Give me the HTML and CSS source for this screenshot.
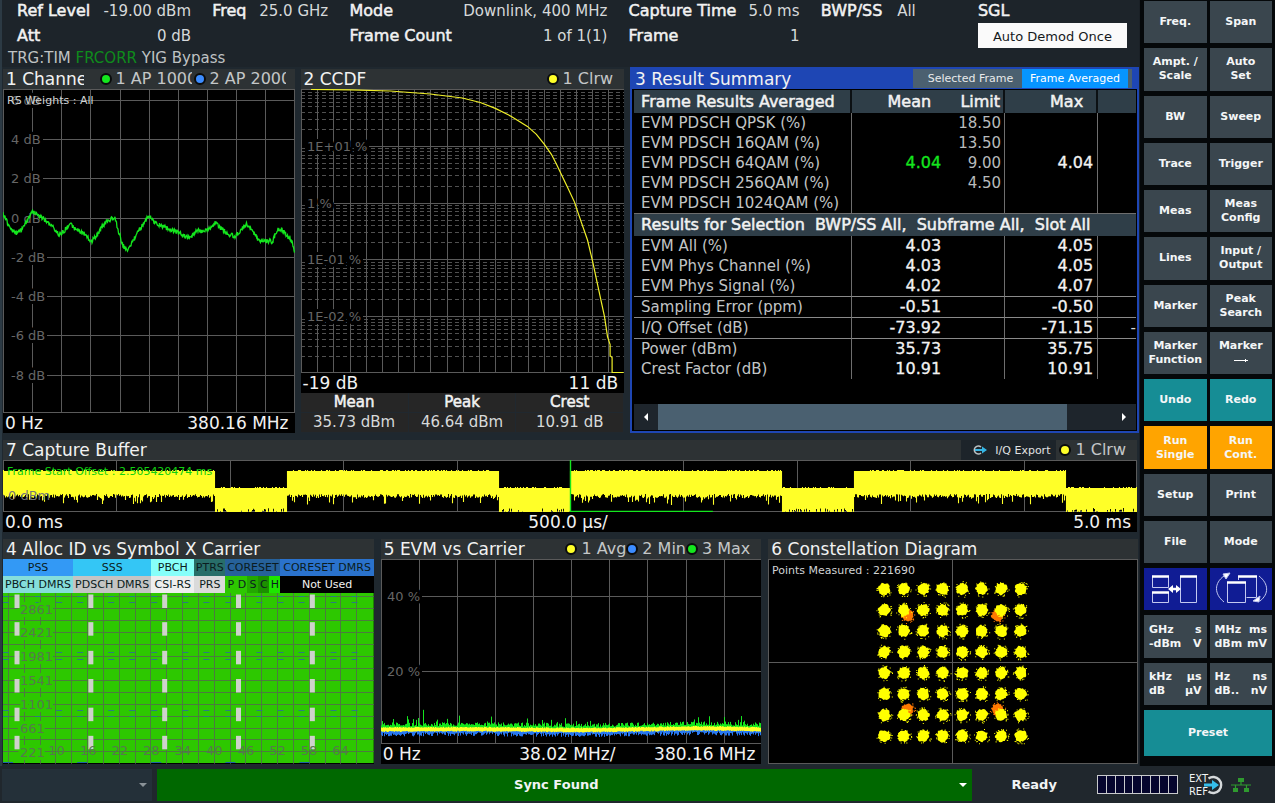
FILE: index.html
```html
<!DOCTYPE html>
<html lang="en">
<head>
<meta charset="utf-8">
<title>Signal Analyzer</title>
<link rel="stylesheet" href="styles.css">
</head>
<body>
<div class="app">
  <main class="work">
    <header class="settings">
      <div class="settings-grid">
        <div class="group group-level">
          <div class="pair"><b>Ref Level</b><span>-19.00 dBm</span></div>
          <div class="pair"><b>Att</b><span>0 dB</span></div>
        </div>
        <div class="group group-freq"><div class="pair"><b>Freq</b><span>25.0 GHz</span></div></div>
        <div class="group group-mode">
          <div class="pair"><b>Mode</b><span>Downlink, 400 MHz</span></div>
          <div class="pair"><b>Frame Count</b><span>1 of 1(1)</span></div>
        </div>
        <div class="group group-capture">
          <div class="pair"><b>Capture Time</b><span>5.0 ms</span></div>
          <div class="pair"><b>Frame</b><span>1</span></div>
        </div>
        <div class="group group-bwp"><div class="pair"><b>BWP/SS</b><span>All</span></div></div>
        <div class="group group-sweep">
          <div class="pair"><b>SGL</b></div>
          <button class="demod" type="button">Auto Demod Once</button>
        </div>
      </div>
      <p class="flags">TRG:TIM <span class="corr">FRCORR</span> YIG Bypass</p>
    </header>

    <div class="row row-top">
      <section class="panel">
        <div class="bar">
          <h2 class="title clip-title">1 Channel</h2>
          <div class="legend legend-clip">
            <span class="trace"><i class="dot green"></i><span class="clip-name">1 AP 1000</span></span>
            <span class="trace"><i class="dot blue"></i><span class="clip-name">2 AP 2000</span></span>
          </div>
        </div>
        <svg class="plot" data-chart="flatness" role="img" aria-label="Channel flatness"></svg>
        <div class="axis"><span>0 Hz</span><span>380.16 MHz</span></div>
      </section>

      <section class="panel">
        <div class="bar">
          <h2 class="title">2 CCDF</h2>
          <div class="legend legend-inset"><span class="trace"><i class="dot yellow"></i>1 Clrw</span></div>
        </div>
        <svg class="plot" data-chart="ccdf" role="img" aria-label="CCDF"></svg>
        <div class="axis"><span>-19 dB</span><span>11 dB</span></div>
        <table class="stats">
          <thead><tr><th>Mean</th><th>Peak</th><th>Crest</th></tr></thead>
          <tbody><tr><td>35.73 dBm</td><td>46.64 dBm</td><td>10.91 dB</td></tr></tbody>
        </table>
      </section>

      <section class="panel panel-active">
        <div class="bar bar-active">
          <h2 class="title">3 Result Summary</h2>
          <div class="tabs">
            <button type="button" class="tab">Selected Frame</button>
            <button type="button" class="tab tab-on">Frame Averaged</button>
            <span class="tab-end"></span>
          </div>
        </div>
        <div class="summary">
          <table class="results">
            <colgroup><col class="c-name"><col class="c-mean"><col class="c-limit"><col class="c-max"><col></colgroup>
            <thead><tr class="head"><th class="name line">Frame Results Averaged</th><th class="h-mean">Mean</th><th class="h-limit line">Limit</th><th class="h-max line">Max</th><th></th></tr></thead>
            <tbody>
              <tr><td class="name line">EVM PDSCH QPSK (%)</td><td></td><td class="limit line">18.50</td><td class="line"></td><td></td></tr>
              <tr><td class="name line">EVM PDSCH 16QAM (%)</td><td></td><td class="limit line">13.50</td><td class="line"></td><td></td></tr>
              <tr><td class="name line">EVM PDSCH 64QAM (%)</td><td class="num pass">4.04</td><td class="limit line">9.00</td><td class="num line">4.04</td><td></td></tr>
              <tr><td class="name line">EVM PDSCH 256QAM (%)</td><td></td><td class="limit line">4.50</td><td class="line"></td><td></td></tr>
              <tr><td class="name line">EVM PDSCH 1024QAM (%)</td><td></td><td class="line"></td><td class="line"></td><td></td></tr>
            </tbody>
            <tbody>
              <tr class="head sub"><th class="name" colspan="5">Results for Selection&nbsp; BWP/SS All,&nbsp; Subframe All,&nbsp; Slot All</th></tr>
              <tr><td class="name line">EVM All (%)</td><td class="num">4.03</td><td class="line"></td><td class="num line">4.05</td><td></td></tr>
              <tr><td class="name line">EVM Phys Channel (%)</td><td class="num">4.03</td><td class="line"></td><td class="num line">4.05</td><td></td></tr>
              <tr class="rule"><td class="name line">EVM Phys Signal (%)</td><td class="num">4.02</td><td class="line"></td><td class="num line">4.07</td><td></td></tr>
              <tr class="rule"><td class="name line">Sampling Error (ppm)</td><td class="num">-0.51</td><td class="line"></td><td class="num line">-0.50</td><td></td></tr>
              <tr class="rule"><td class="name line">I/Q Offset (dB)</td><td class="num">-73.92</td><td class="line"></td><td class="num line">-71.15</td><td class="more">-</td></tr>
              <tr><td class="name line">Power (dBm)</td><td class="num">35.73</td><td class="line"></td><td class="num line">35.75</td><td></td></tr>
              <tr><td class="name line">Crest Factor (dB)</td><td class="num">10.91</td><td class="line"></td><td class="num line">10.91</td><td></td></tr>
            </tbody>
          </table>
          <div class="scroller">
            <button type="button" class="scroll-btn" aria-label="Scroll left"><i class="tri tri-left"></i></button>
            <div class="track"><div class="thumb"></div></div>
            <button type="button" class="scroll-btn" aria-label="Scroll right"><i class="tri tri-right"></i></button>
          </div>
        </div>
      </section>
    </div>

    <section class="panel panel-capture">
      <div class="bar">
        <h2 class="title">7 Capture Buffer</h2>
        <div class="legend">
          <button type="button" class="export">
            <svg width="16" height="12" viewBox="0 0 16 12" aria-hidden="true"><path d="M9 3A4 4 0 1 0 9 9" fill="none" stroke="#b8c0c4" stroke-width="1.6"/><path d="M3 5h7V2.500l5 3.500-5 3.500V7H3z" fill="#35b5e5"/></svg>
            I/Q Export</button>
          <span class="trace trace-last"><i class="dot yellow"></i>1 Clrw</span>
        </div>
      </div>
      <svg class="plot" data-chart="capture" role="img" aria-label="Capture buffer"></svg>
      <div class="axis axis-three"><span>0.0 ms</span><span>500.0 µs/</span><span>5.0 ms</span></div>
    </section>

    <div class="row row-bottom">
      <section class="panel">
        <div class="bar"><h2 class="title">4 Alloc ID vs Symbol X Carrier</h2></div>
        <div class="alloc">
          <span class="a-pss">PSS</span><span class="a-sss">SSS</span><span class="a-pbch">PBCH</span><span class="a-ptrs">PTRS</span><span class="a-core">CORESET</span><span class="a-cdmrs">CORESET DMRS</span>
          <span class="a-pbdmrs">PBCH DMRS</span><span class="a-pddmrs">PDSCH DMRS</span><span class="a-csi">CSI-RS</span><span class="a-prs">PRS</span><span class="a-pdsch"><i>P</i><i>D</i><i>S</i><i>C</i><i>H</i></span><span class="a-none">Not Used</span>
        </div>
        <svg class="plot" data-chart="alloc" role="img" aria-label="Allocation map"></svg>
      </section>

      <section class="panel">
        <div class="bar">
          <h2 class="title">5 EVM vs Carrier</h2>
          <div class="legend legend-inset">
            <span class="trace"><i class="dot yellow"></i>1 Avg</span><span class="trace"><i class="dot blue"></i>2 Min</span><span class="trace"><i class="dot green"></i>3 Max</span>
          </div>
        </div>
        <svg class="plot" data-chart="evm" role="img" aria-label="EVM vs carrier"></svg>
        <div class="axis"><span>0 Hz</span><span class="axis-mid">38.02 MHz/</span><span>380.16 MHz</span></div>
      </section>

      <section class="panel">
        <div class="bar"><h2 class="title">6 Constellation Diagram</h2></div>
        <svg class="plot" data-chart="constellation" role="img" aria-label="Constellation diagram"></svg>
      </section>
    </div>
  </main>

  <nav class="keys" aria-label="Instrument keys">
    <button type="button" class="key">Freq.</button><button type="button" class="key">Span</button>
    <button type="button" class="key">Ampt. /<br>Scale</button><button type="button" class="key">Auto<br>Set</button>
    <button type="button" class="key">BW</button><button type="button" class="key">Sweep</button>
    <button type="button" class="key">Trace</button><button type="button" class="key">Trigger</button>
    <button type="button" class="key">Meas</button><button type="button" class="key">Meas<br>Config</button>
    <button type="button" class="key">Lines</button><button type="button" class="key">Input /<br>Output</button>
    <button type="button" class="key">Marker</button><button type="button" class="key">Peak<br>Search</button>
    <button type="button" class="key">Marker<br>Function</button>
    <button type="button" class="key">Marker<svg class="arrow" width="16" height="14" viewBox="0 0 16 14" aria-hidden="true"><path d="M1 7.500H15M12.500 6v3" stroke="#fff" stroke-width="1" fill="none"/></svg></button>
    <button type="button" class="key teal">Undo</button><button type="button" class="key teal">Redo</button>
    <button type="button" class="key orange">Run<br>Single</button><button type="button" class="key orange">Run<br>Cont.</button>
    <button type="button" class="key">Setup</button><button type="button" class="key">Print</button>
    <button type="button" class="key">File</button><button type="button" class="key">Mode</button>
    <button type="button" class="key navy" aria-label="Toggle split view">
      <svg width="50" height="32" viewBox="0 0 50 32" fill="none" stroke="#c3c8f0" aria-hidden="true"><path d="M2.500 3v11.500h16V3M2.500 20v9.500h16V20M30.500 3v26.500h16V3"/><path d="M2 3.500h17M2 19.500h17M30 3.500h17" stroke="#fff" stroke-width="2.500"/><path d="M21 16h8" stroke="#fff" stroke-width="2.500"/><path d="M18 16l5-4v8zM31 16l-5-4v8z" fill="#fff" stroke="none"/></svg>
    </button>
    <button type="button" class="key navy" aria-label="Cycle windows">
      <svg width="54" height="34" viewBox="0 0 54 34" fill="none" stroke="#c3c8f0" aria-hidden="true"><path d="M24.500 8V4M42.500 4v21.500h-10"/><path d="M24 4.500h19" stroke="#fff" stroke-width="2.500"/><path d="M13.500 10v20.500h18V10"/><path d="M13 10.500h19" stroke="#fff" stroke-width="2.500"/><path d="M10 30C0 22 0 11 10 4M45 4c10 8 10 18 1 25"/><path d="M9 2l7-1-4 6zM46 24l-1 6-6-1z" fill="#fff"/></svg>
    </button>
    <button type="button" class="key units"><span>GHz</span><span>s</span><span>-dBm</span><span>V</span></button>
    <button type="button" class="key units"><span>MHz</span><span>ms</span><span>dBm</span><span>mV</span></button>
    <button type="button" class="key units"><span>kHz</span><span>µs</span><span>dB</span><span>µV</span></button>
    <button type="button" class="key units"><span>Hz</span><span>ns</span><span>dB..</span><span>nV</span></button>
    <button type="button" class="key teal wide">Preset</button>
  </nav>
</div>

<footer class="status">
  <div class="pick pick-empty"><select aria-label="Message list"><option></option></select></div>
  <div class="pick pick-sync"><select aria-label="Measurement status"><option>Sync Found</option></select></div>
  <span class="ready">Ready</span>
  <div class="cells" aria-hidden="true"><i></i><i></i><i></i><i></i><i></i><i></i><i></i><i></i><i></i></div>
  <div class="ext">
    <span>EXT<br>REF</span>
    <svg width="20" height="20" viewBox="0 0 20 20" aria-hidden="true"><path d="M4.500 3.500A8 8 0 1 1 4.500 16.500" fill="none" stroke="#d5d9db" stroke-width="2.400"/><path d="M0 8.500h8V5l7 5-7 5v-3.500H0z" fill="#35bdea"/></svg>
  </div>
  <svg class="net" width="20" height="16" viewBox="0 0 20 16" aria-hidden="true"><path d="M7 1h6v4H7zM2 11h5v4H2zM13 11h5v4h-5z" fill="#2f9a2f"/><path d="M10 5v3M0 8h20M4.500 8v3M15.500 8v3" stroke="#2f9a2f" stroke-width="1.200"/></svg>
</footer>
<script src="charts.js"></script>
</body>
</html>
```
FILE: styles.css
```css
* { box-sizing: border-box; }

body {
  margin: 0;
  min-height: 100vh;
  display: flex;
  flex-direction: column;
  background: #1f272e;
  color: #d6d9da;
  font-family: "DejaVu Sans", Verdana, sans-serif;
  font-size: 15px;
}

button, select { font-family: inherit; color: inherit; border: 0; margin: 0; padding: 0; border-radius: 0; }
h2, p { margin: 0; font-weight: normal; }

.app { flex: 1; display: grid; grid-template-columns: minmax(0, 1fr) 136px; }

.work {
  display: flex;
  flex-direction: column;
  min-width: 0;
  border-left: 2px solid #2c3a44;
  background: #1f282f;
}

/* Settings header */
.settings { height: 67px; padding: 0 12px 0 6px; background: #1d242a; white-space: nowrap; }
.settings-grid { display: flex; justify-content: space-between; height: 50px; padding-left: 9px; }
.pair { display: flex; justify-content: space-between; height: 25px; line-height: 22px; }
.pair b { font-size: 16px; font-weight: normal; color: #f2f2f2; -webkit-text-stroke: 0.5px #f2f2f2; }
.group-level { width: 174px; }
.group-freq { width: 116px; }
.group-mode { width: 258px; }
.group-capture { width: 171px; }
.group-bwp { width: 95px; }
.group-sweep { width: 149px; margin-left: 41px; }
.group-sweep .pair { height: 23px; }
.demod { width: 100%; height: 25px; background: #fafafa; color: #15191c; font-size: 13px; line-height: 22px; padding-top: 3px; display: block; }
.flags { line-height: 17px; color: #bfc2c3; }
.corr { color: #0f8a1c; }

/* Panel rows */
.row { display: grid; gap: 7px; min-height: 0; }
.row-top { grid-template-columns: minmax(0, 291fr) minmax(0, 323fr) minmax(0, 508fr); flex: 366 1 0; gap: 6px; padding: 0 0 0 1px; }
.row-bottom { grid-template-columns: minmax(0, 371fr) minmax(0, 381fr) minmax(0, 370fr); flex: 225 1 0; margin: 7px 1px 2px; }

.panel { display: flex; flex-direction: column; min-width: 0; min-height: 0; }
.row-top .panel { padding-top: 2px; }
.panel-capture { flex: 0 0 92px; margin: 7px 2px 0 1px; }
.bar { display: flex; justify-content: space-between; align-items: center; height: 20px; flex: none; padding-left: 3px; background: #2d3234; overflow: hidden; white-space: nowrap; }
.title { font-size: 17px; line-height: 20px; color: #f2f2f2; }
.clip-title { width: 78px; overflow: hidden; }
.legend { display: flex; align-items: center; font-size: 16px; line-height: 20px; color: #c4c7c8; }
.legend-inset { padding-right: 11px; }
.legend-clip { gap: 2px; padding-right: 9px; }
.clip-name { width: 76px; overflow: hidden; }
.trace { display: flex; align-items: center; gap: 4px; }
.trace-last { padding-right: 11px; padding-left: 3px; }
.dot { width: 12px; height: 12px; border: 2px solid #0a0c0d; border-radius: 50%; }
.green { background: #14e61e; }
.blue { background: #3c8cff; }
.yellow { background: #ffff28; }

.plot { display: block; flex: 1 1 0; width: 100%; min-height: 40px; background: #000; }
.axis { flex: none; height: 20px; line-height: 20px; background: #000; color: #f2f2f2; font-size: 17px; display: flex; justify-content: space-between; padding: 0 6px 0 2px; }
.axis-three { display: grid; grid-template-columns: 1fr auto 1fr; }
.axis-three span:last-child { text-align: right; }
.axis-mid { margin-left: 60px; }

.stats { flex: none; width: 100%; table-layout: fixed; border-collapse: collapse; background: #262626; line-height: 19px; }
.stats th, .stats td { padding: 0; text-align: center; border: 1px solid #20282f; border-width: 0 1px 1px 0; height: 19px; }
.stats th { color: #f2f2f2; font-weight: normal; -webkit-text-stroke: 0.5px #f2f2f2; }

/* Result summary */
.row-top .panel-active { border: 2px solid #1e46b4; border-top: 0; padding: 0; }
.bar-active { height: 22px; background: #1e46b4; padding: 2px 5px 0 3px; }
.tabs { display: flex; height: 20px; padding-bottom: 1px; }
.tab { background: #4b6070; width: 109px; font-size: 11px; line-height: 19px; padding-left: 6px; color: #e8eaeb; }
.tab-on { background: #0795ff; width: 106px; padding: 0; color: #fff; }
.tab-end { width: 4px; background: #4b6070; }
.summary { flex: 1; display: flex; flex-direction: column; justify-content: space-between; background: #000; padding: 1px 1px 1px 2px; }
.results { width: 100%; table-layout: fixed; border-collapse: separate; border-spacing: 0; white-space: nowrap; }
.c-name { width: 218px; }
.c-mean { width: 93px; }
.c-limit { width: 60px; }
.c-max { width: 93px; }
.results td, .results th { padding: 0 3px 0 0; height: 20px; line-height: 20px; text-align: right; }
.results .name { text-align: left; padding-left: 7px; }
.results td.name { color: #c2c5c6; }
.results .line { border-right: 1px solid #6e6e6e; }
.results .head th { height: 23px; line-height: 22px; background: #2f3e48; color: #f2f2f2; font-size: 16px; font-weight: normal; -webkit-text-stroke: 0.5px #f2f2f2; }
.results .head .line { border-right: 2px solid #0c1013; }
.results .h-mean { padding-right: 14px; }
.results .h-max { padding-right: 13px; }
.results .sub th { border-top: 1px solid #6e6e6e; }
.num { font-size: 16px; color: #f2f2f2; -webkit-text-stroke: 0.3px #f2f2f2; }
.results .num { padding-right: 4px; }
.pass { color: #14e61e; -webkit-text-stroke-color: #14e61e; }
.limit { color: #b8bbbc; }
.rule td { border-bottom: 1px solid #8a8a8a; }
.results .more { padding-right: 0; }
.scroller { display: flex; height: 26px; background: #1e252c; }
.scroll-btn { width: 24px; background: #1e252c; display: grid; place-items: center; }
.track { flex: 1; }
.thumb { width: 90%; height: 100%; background: #4a6070; }
.tri { border: 4px solid transparent; }
.tri-left { border-right-color: #fff; border-left-width: 0; }
.tri-right { border-left-color: #fff; border-right-width: 0; }

.export { height: 20px; background: #1d242a; display: flex; align-items: center; gap: 7px; padding: 0 6px 0 11px; font-size: 11px; color: #e0e2e3; }

/* Allocation legend */
.alloc { display: grid; grid-template-columns: 70fr 78fr 43fr 31fr 55fr 93fr; flex: none; font-size: 11px; line-height: 17px; color: #0b1c20; white-space: nowrap; }
.alloc span { text-align: center; height: 17px; min-width: 0; display: flex; justify-content: center; }
.a-pss { background: #3399f5; }
.a-sss { background: #34c6f5; }
.a-pbch { background: #87fffa; }
.a-ptrs { background: #286e69; }
.a-core { background: #26619a; }
.a-cdmrs { background: #2a72cc; }
.a-pbdmrs { background: #85dedb; }
.a-pddmrs { background: #c4c4c4; }
.a-csi { background: #eeeeee; }
.a-prs { background: #dadada; }
.a-pdsch i { flex: 1; font-style: normal; background: #2dc800; }
.a-pdsch i:nth-child(3) { background: #23a800; }
.a-pdsch i:nth-child(4) { background: #1c9000; }
.a-pdsch i:nth-child(5) { background: #1ee600; }
.a-none { background: #000; color: #f2f2f2; }

/* SVG chart parts */
.grid { stroke: #5a5a5a; stroke-width: 1; fill: none; shape-rendering: crispEdges; }
.grid-dash { stroke-dasharray: 4 3; stroke: #505050; }
.tick { fill: #666; font-size: 13px; stroke: #000; stroke-width: 6px; stroke-linejoin: round; paint-order: stroke; }
.tick-alloc { stroke: #2dc800; fill: #557a4d; }
.tick-bare { stroke: none; }
.note { fill: #d0d3d4; font-size: 11px; }
.note-green { fill: #10d010; }
.tick-small { fill: #777; font-size: 13px; }

/* Keypad */
.keys { display: grid; grid-template-columns: 1fr 1fr; grid-template-rows: repeat(15, minmax(0, 1fr)) 46px; gap: 5px 3px; padding: 1px 3px 10px 4px; background: #05080a; border-left: 1px solid #1a2026; }
.key { display: flex; flex-direction: column; align-items: center; justify-content: center; min-height: 36px; background: #3a464e; color: #f4f6f7; font-size: 11px; font-weight: bold; line-height: 14px; }
.key .arrow { display: block; }
.teal { background: #168d95; }
.orange { background: #ffa400; }
.navy { background: #101c94; }
.wide { grid-column: 1 / -1; }
.units { display: grid; grid-template-columns: auto auto; justify-content: space-between; align-content: center; justify-items: start; padding: 0 5px; }
.units span:nth-child(even) { justify-self: end; }

/* Status line */
.status { display: flex; align-items: center; height: 37px; padding: 0 0 0 2px; background: #20272d; font-weight: bold; font-size: 13px; color: #f2f4f5; }
.pick { display: grid; align-items: center; height: 32px; }
.pick select, .pick::after { grid-area: 1 / 1; }
.pick select { width: 100%; height: 100%; appearance: none; background: #243039; font-size: 13px; font-weight: bold; text-align: center; text-align-last: center; padding: 0 16px 0 0; }
.pick::after { content: ""; justify-self: end; margin-right: 5px; border: 4px solid transparent; border-top-color: #fff; border-bottom-width: 0; pointer-events: none; }
.pick-empty { width: 150px; }
.pick-empty::after { border-top-color: #8a9298; }
.pick-sync { flex: 1; margin-left: 5px; }
.pick-sync select { background: #006800; }
.ready { margin: 0 40px; }
.cells { display: flex; gap: 1px; width: 81px; height: 19px; padding: 1px; background: #c8cacc; }
.cells i { flex: 1; background: #05052d; }
.ext { display: flex; align-items: center; margin-left: 11px; font-size: 10px; line-height: 13px; font-weight: normal; }
.ext svg { margin-left: -4px; }
.net { margin: 0 24px 0 7px; }
```
FILE: charts.js
```js
(function () {
  var NS = "http://www.w3.org/2000/svg";

  function rng(seed) {
    return function () {
      seed = (seed * 1664525 + 1013904223) % 4294967296;
      return seed / 4294967296;
    };
  }
  function add(svg, tag, attrs, text) {
    var el = document.createElementNS(NS, tag);
    for (var k in attrs) el.setAttribute(k, attrs[k]);
    if (text !== undefined) el.textContent = text;
    svg.appendChild(el);
    return el;
  }
  function path(svg, d, attrs) { attrs.d = d; return add(svg, "path", attrs); }
  function line(a, b, c, d) { return "M" + a + " " + b + "L" + c + " " + d; }
  function columns(w, h, n) {
    var d = "";
    for (var i = 0; i <= n; i++) {
      var x = Math.min(w - 0.5, Math.round(i * w / n) + 0.5);
      d += line(x, 0, x, h);
    }
    return d;
  }
  function rows(w, ys) {
    return ys.map(function (y) { y = Math.round(y) + 0.5; return line(0, y, w, y); }).join("");
  }
  /* A label at the left edge, with its grid line running on from its end. */
  function tick(svg, w, x, y, text) {
    var t = add(svg, "text", { x: x, y: y + 5, "class": "tick" }, text);
    var box = t.getBBox(), end = box.x + box.width + 2;
    y = Math.round(y) + 0.5;
    path(svg, line(end, y, w, y), { "class": "grid" });
  }
  function interp(pts, x) {
    for (var i = 1; i < pts.length; i++) {
      if (x <= pts[i][0]) {
        var a = pts[i - 1], b = pts[i];
        return a[1] + (b[1] - a[1]) * (x - a[0]) / (b[0] - a[0]);
      }
    }
    return pts[pts.length - 1][1];
  }

  var charts = {
    flatness: function (svg, w, h) {
      var sy = h / 323, i;
      path(svg, columns(w, h, 10) + rows(w, [0, h - 1]), { "class": "grid" });
      ["6", "4", "2", "0", "-2", "-4", "-6", "-8"].forEach(function (v, n) {
        tick(svg, w, 8, (11 + n * 39.1) * sy, v + " dB");
      });
      var pts = [[12, 10], [25, 38], [40, 62], [55, 70], [70, 55], [85, 30], [98, 8], [110, 8], [125, 20], [145, 38], [160, 50], [178, 74], [195, 62], [210, 42], [225, 55], [240, 65], [255, 72], [275, 96], [290, 78], [305, 55], [320, 35], [345, 22], [355, 60], [370, 108], [385, 120], [400, 90], [420, 58], [447, 18], [465, 38], [490, 50], [510, 60], [530, 65], [550, 78], [570, 82], [590, 62], [610, 65], [630, 55], [645, 40], [665, 58], [680, 70], [705, 80], [720, 60], [740, 42], [755, 65], [775, 90], [800, 94], [815, 95], [830, 60], [845, 60], [860, 80], [875, 98], [881, 122]];
      var r = rng(7), d = "M";
      for (i = 0; i < w; i += 0.5) {
        var y = (interp(pts, 12 + i / w * 869) / 3 + 120.5 + (r() - 0.5) * 4.5) * sy;
        d += i + " " + y.toFixed(1) + " ";
      }
      path(svg, d, { fill: "none", stroke: "#14e61e", "stroke-width": 1.3 });
      add(svg, "text", { x: 4, y: 15, "class": "note" }, "RS Weights : All");
    },

    ccdf: function (svg, w, h) {
      var decade = h / 5, dash = [], i, n;
      for (i = 0; i < 5; i++) {
        for (n = 2; n < 10; n++) dash.push(decade * (i + 1 - Math.log10(n)));
      }
      path(svg, rows(w, dash), { "class": "grid grid-dash" });
      path(svg, columns(w, h, 20) + rows(w, [0, h - 1]), { "class": "grid" });
      ["1E+01 %", "1 %", "1E-01 %", "1E-02 %"].forEach(function (t, k) {
        tick(svg, w, 6, (k + 1) * decade, t);
      });
      var pts = [[311, 90], [350, 90.3], [390, 91.5], [430, 94.5], [462, 98.5], [480, 103], [495, 109], [511, 117], [527, 127], [536, 135], [544, 145], [551, 155], [556, 165], [567, 188], [574, 203], [578, 215], [587, 241], [592, 262], [598, 290], [604, 318], [607, 338], [609.5, 346], [609.5, 357], [611.5, 359], [611.5, 374], [623, 374]];
      path(svg, "M" + pts.map(function (p) {
        return ((p[0] - 301) / 323 * w).toFixed(1) + " " + ((p[1] - 89.5) / 285 * h).toFixed(1);
      }).join("L"), { fill: "none", stroke: "#f0f028", "stroke-width": 1.2 });
    },

    capture: function (svg, w, h) {
      path(svg, columns(w, h, 10) + rows(w, [0, h - 1]), { "class": "grid" });
      var r = rng(21), s = h / 52, d = "";
      for (var x = 0; x < w; x++) {
        var phase = (x / w * 4) % 1, high = phase < 0.747;
        var top = (high ? 11 : 28) - (r() < 0.3 ? 1 : 0);
        var bottom = high ? 34 + r() * 4 + (r() < 0.16 ? r() * 8 : 0) : 52 - (r() < 0.35 ? r() * 4 : 0);
        d += line(x + 0.5, (top * s).toFixed(1), x + 0.5, (bottom * s).toFixed(1));
      }
      path(svg, d, { stroke: "#ffff28", "stroke-width": 1.1 });
      add(svg, "text", { x: 5, y: 40 * s, "class": "tick-small" }, "0 dBm");
      add(svg, "text", { x: 4, y: 15 * s, "class": "note note-green" }, "Frame Start Offset : 2.505420474 ms");
      var mid = Math.round(w / 2) + 0.5, base = Math.floor(h) - 0.5;
      path(svg, "M" + mid + " 0V" + base + "H" + w * 0.626, { fill: "none", stroke: "#14e61e", "stroke-width": 1.4 });
    },

    alloc: function (svg, w, h) {
      var sx = w / 370, sy = h / 170, d = "", i;
      add(svg, "rect", { width: w, height: h - 1, fill: "#2dc800" });
      for (i = 0; i < 23; i++) d += line((5.5 + i * 15.8) * sx, 0, (5.5 + i * 15.8) * sx, h);
      for (i = 0; i < 14; i++) d += line(0, (3.7 + i * 11.87) * sy, w, (3.7 + i * 11.87) * sy);
      path(svg, d, { "class": "grid", opacity: 0.7 });
      var teal = [0, 32, 53, 74, 105, 126, 148, 179, 200, 222, 253, 274, 295, 327, 348];
      [3, 9, 59, 66, 116, 122].forEach(function (y) {
        teal.forEach(function (x) { add(svg, "rect", { x: x * sx, y: Math.round(y * sy), width: 6, height: 1, fill: "#2b7d80" }); });
      });
      [0, 74, 148, 222, 296].forEach(function (x) {
        add(svg, "rect", { x: x * sx, y: Math.floor(h) - 2, width: 10, height: 1, fill: "#1c64a8" });
      });
      ["2861", "2421", "1981", "1541", "1101", "661", "221"].forEach(function (t, n) {
        add(svg, "text", { x: 17, y: (20.5 + n * 23.7) * sy, "class": "tick tick-alloc" }, t);
      });
      for (i = 0; i < 5; i++) [1.5, 29, 57.5, 85.5, 114, 142].forEach(function (y) {
        add(svg, "rect", { x: (11.5 + i * 73.7) * sx, y: y * sy, width: 5, height: 13.5, fill: "#cfd2cc" });
      });
      for (i = 0; i < 10; i++) {
        add(svg, "text", { x: (53.5 + i * 31.5) * sx, y: 161 * sy, "text-anchor": "middle", "class": "tick tick-alloc tick-bare" }, 10 + i * 6);
      }
    },

    evm: function (svg, w, h) {
      path(svg, columns(w, h, 10) + rows(w, [0, h - 1]), { "class": "grid" });
      tick(svg, w, 6, h * 0.2, "40 %");
      tick(svg, w, 6, h * 0.603, "20 %");
      var r = rng(99), s = h / 184, g = "", b = "", y = "";
      for (var x = 0.5; x < w; x++) {
        var c = 169.5 - 1.2 * Math.sin(x / w * Math.PI * 3) * (x / w);
        var up = c - 3 - r() * 4 - (r() < 0.12 ? r() * 8 : 0);
        if (Math.abs(x - w * 0.111) < 0.6) up = 150;
        g += line(x, up * s, x, c * s);
        b += line(x, c * s, x, (c + 3 + r() * 4) * s);
        y += line(x, (c - 1.5 - r()) * s, x, (c + 1.5 + r()) * s);
      }
      path(svg, g, { stroke: "#14e61e" });
      path(svg, b, { stroke: "#2878f0" });
      path(svg, y, { stroke: "#ffff28", "stroke-width": 1.2 });
    },

    constellation: function (svg, w, h) {
      var cx = Math.floor(w / 2) + 0.5, cy = Math.round(h / 2) + 0.5, r = rng(5);
      path(svg, line(cx, 0, cx, h) + line(0, cy, w, cy), { "class": "grid" });
      add(svg, "rect", { x: 0.5, y: 0.5, width: w - 1, height: h - 1, "class": "grid" });
      function cloud(x, y, color, radius) {
        var d = "", k, a, q, n = 26;
        for (k = 0; k < n; k++) {
          a = k / n * Math.PI * 2;
          q = radius - 1 + r() * 1.8;
          d += (k ? "L" : "M") + (x + Math.cos(a) * q).toFixed(1) + " " + (y + Math.sin(a) * q).toFixed(1);
        }
        d += "Z";
        for (k = 0; k < 14; k++) {
          a = r() * Math.PI * 2;
          q = radius + r() * 2;
          d += "M" + (x + Math.cos(a) * q).toFixed(1) + " " + (y + Math.sin(a) * q).toFixed(1) + "h1v1h-1z";
        }
        path(svg, d, { fill: color });
      }
      [[-45, -47], [45, -47], [-45, 47], [45, 47]].forEach(function (p) { cloud(cx + p[0], cy + p[1], "#ff7800", 6); });
      for (var i = 0; i < 8; i++) for (var j = 0; j < 8; j++) cloud(cx + (i - 3.5) * 19.5, cy + (j - 3.5) * 21, "#ffff00", 6);
      add(svg, "text", { x: 4, y: 15, "class": "note" }, "Points Measured : 221690");
    }
  };

  function draw() {
    document.querySelectorAll("[data-chart]").forEach(function (svg) {
      var box = svg.getBoundingClientRect();
      svg.textContent = "";
      charts[svg.dataset.chart](svg, box.width, box.height);
    });
  }
  draw();
  window.addEventListener("resize", draw);
})();
```
